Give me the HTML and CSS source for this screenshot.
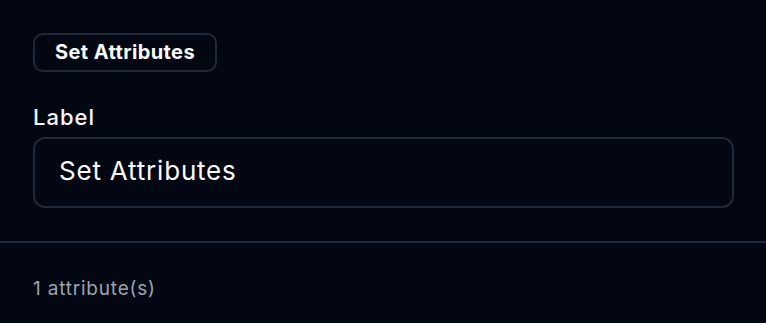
FILE: index.html
```html
<!DOCTYPE html>
<html lang="en">
<head>
  <meta charset="UTF-8">
  <title>Set Attributes</title>
  <link rel="stylesheet" href="styles.css">
</head>
<body>

  <div class="panel">
    <div class="head">
      <span class="badge">Set Attributes</span>
      <label class="label" for="label">Label</label>
      <input class="field" id="label" type="text" value="Set Attributes">
    </div>
    <div class="foot">1 attribute(s)</div>
  </div>

</body>
</html>
```

FILE: styles.css
```css
body {
  margin: 0;
  padding: 0;
  background-color: #030712;
  font-family: Inter, 'Noto Sans', sans-serif;
  color: #f9fafb;
  height: 100vh;
  overflow: hidden;
}

.head {
  display: flex;
  flex-direction: column;
  align-items: flex-start;
  padding: 33px 32px 33px 33px;
  border-bottom: 2px solid #1f2937;
}

.badge {
  box-sizing: border-box;
  height: 39px;
  line-height: 34px;
  padding: 0 20px;
  border: 2px solid #1f2937;
  border-radius: 10px;
  font-size: 20px;
  font-weight: 700;
  letter-spacing: 0.4px;
  color: #f9fafb;
}

.label {
  margin-top: 31px;
  line-height: 28px;
  font-size: 22px;
  font-weight: 500;
  letter-spacing: 1px;
  color: #f3f4f6;
}

.field {
  box-sizing: border-box;
  width: 701px;
  height: 71px;
  margin-top: 6px;
  padding: 0 24px 4px;
  border: 2px solid #1f2937;
  border-radius: 12px;
  background-color: #030712;
  font-family: inherit;
  font-size: 26px;
  letter-spacing: 0.8px;
  color: #f9fafb;
  outline: none;
}

.foot {
  padding: 32px 33px;
  line-height: 28px;
  font-size: 19px;
  letter-spacing: 0.8px;
  color: #9ca3af;
}
```
